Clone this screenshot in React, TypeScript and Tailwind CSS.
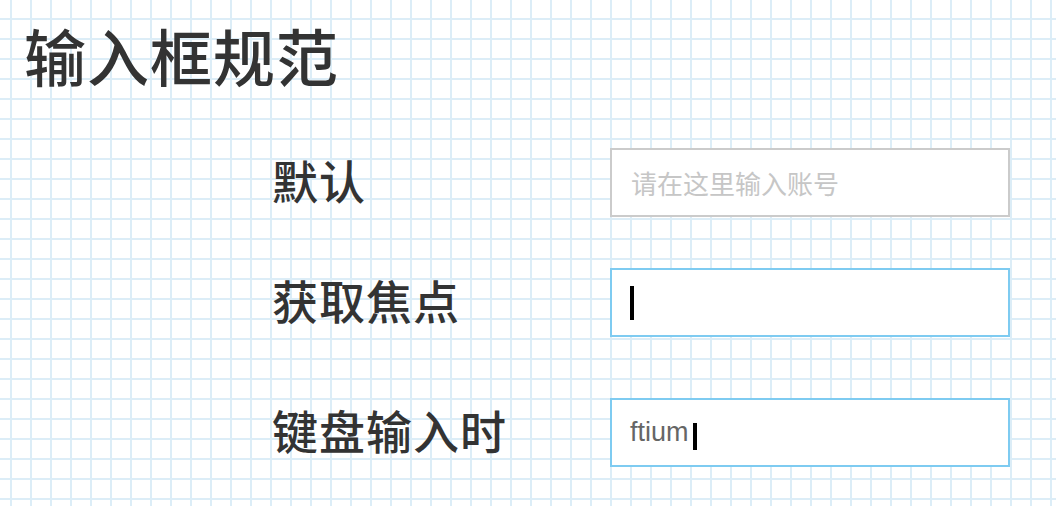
import React from "react";

type Row = {
  label: string;
  state: "default" | "focus" | "typing";
};

const rows: Row[] = [
  { label: "默认", state: "default" },
  { label: "获取焦点", state: "focus" },
  { label: "键盘输入时", state: "typing" },
];

const Caret: React.FC<{ className?: string }> = ({ className = "" }) => (
  <span className={`inline-block w-[4px] bg-black ${className}`} />
);

const FakeInput: React.FC<{ state: Row["state"] }> = ({ state }) => {
  if (state === "default") {
    return (
      <input
        readOnly
        placeholder="请在这里输入账号"
        className="w-[400px] h-[69px] border-2 border-[#cbcbcb] bg-white pl-[19px] text-[26px] outline-none placeholder:text-[#c6c6c6] font-['Noto_Sans_CJK_SC',sans-serif]"
      />
    );
  }

  return (
    <div className="w-[400px] h-[69px] border-2 border-[#7ecbf1] bg-white pl-[18px] flex items-center">
      {state === "focus" ? (
        <Caret className="h-[34px]" />
      ) : (
        <>
          <span className="text-[27px] text-[#666] leading-none font-['Liberation_Sans',sans-serif]">
            ftium
          </span>
          <Caret className="h-[27px] ml-[4px] mt-[8px]" />
        </>
      )}
    </div>
  );
};

export default function App() {
  return (
    <div className="min-h-[506px] w-full bg-white bg-[linear-gradient(to_right,#dcedf7_2px,transparent_2px),linear-gradient(to_bottom,#dcedf7_2px,transparent_2px)] bg-[size:20px_20px] bg-[position:10px_18px] font-['Noto_Sans_CJK_SC',sans-serif] text-[#333]">
      {/* Title */}
      <h1 className="pl-[24px] pt-[24px] text-[62px] leading-[62px] font-medium tracking-[1px]">
        输入框规范
      </h1>

      {/* Rows */}
      <div className="mt-[62px] pl-[272px] flex flex-col">
        {rows.map((row, i) => (
          <div
            key={row.label}
            className={`flex items-center h-[69px] ${
              i === 1 ? "mt-[51px]" : i === 2 ? "mt-[61px]" : ""
            }`}
          >
            <div className="w-[338px] pb-[8px] text-[46px] leading-[46px] font-medium tracking-[1px]">
              {row.label}
            </div>
            <FakeInput state={row.state} />
          </div>
        ))}
      </div>
    </div>
  );
}
